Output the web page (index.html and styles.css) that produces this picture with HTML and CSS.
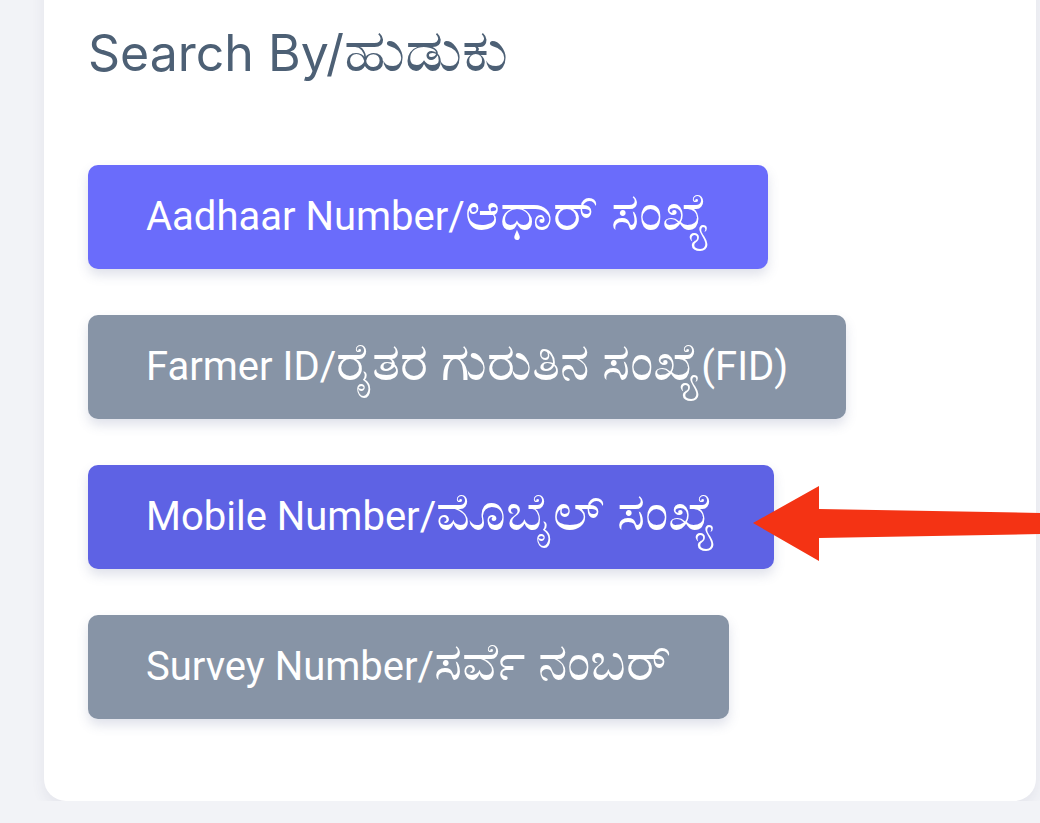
FILE: index.html
```html
<!DOCTYPE html>
<html lang="en">
<head>
    <meta charset="UTF-8">
    <meta name="viewport" content="width=device-width, initial-scale=1.0">
    <title>Search By</title>
    <link rel="stylesheet" href="styles.css">
</head>
<body>
    <div id="card">
        <h2 class="title">Search By/<span class="kn">ಹುಡುಕು</span></h2>
        <div class="options">
            <button class="option primary">Aadhaar Number/<span class="kn">ಆಧಾರ್ ಸಂಖ್ಯೆ</span></button>
            <button class="option muted">Farmer ID/<span class="kn">ರೈತರ ಗುರುತಿನ ಸಂಖ್ಯೆ</span>(FID)</button>
            <div class="pointed">
                <button class="option active">Mobile Number/<span class="kn">ಮೊಬೈಲ್ ಸಂಖ್ಯೆ</span></button>
                <svg class="arrow" width="290" height="76" viewBox="0 0 290 76">
                    <polygon points="0,37 66,0 66,23 290,27 290,48 66,52 66,75" fill="#f43314"/>
                </svg>
            </div>
            <button class="option muted">Survey Number/<span class="kn">ಸರ್ವೆ ನಂಬರ್</span></button>
        </div>
    </div>
</body>
</html>
```

FILE: styles.css
```css
body {
    margin: 0;
    background-color: #f2f3f7;
    font-family: Roboto, "Noto Sans", sans-serif;
    overflow: hidden;
}
#card {
    margin: -33px 4px 0 44px;
    padding: 54px 44px 82px 44px;
    background-color: #fff;
    border-radius: 22px;
    box-shadow: 0 6px 14px rgba(60, 70, 100, 0.08);
}
.title {
    margin: 0;
    font-family: Inter, "Noto Sans", sans-serif;
    font-size: 50px;
    line-height: 64px;
    font-weight: 400;
    color: #4d6075;
}
.title .kn {
    font-size: 1.2em;
    line-height: 0;
}
.options {
    display: flex;
    flex-direction: column;
    align-items: flex-start;
    gap: 46px;
    margin-top: 80px;
}
.option {
    height: 104px;
    padding: 0 58px;
    border: none;
    border-radius: 10px;
    font-family: Roboto, "Noto Sans", sans-serif;
    font-size: 40px;
    line-height: 1;
    color: #fff;
    text-align: left;
    box-shadow: 0 6px 12px rgba(80, 90, 140, 0.18);
}
.option .kn {
    font-size: 1.32em;
    line-height: 0;
}
.primary {
    background-color: #6a6cfb;
}
.active {
    background-color: #5e62e4;
}
.muted {
    background-color: #8794a6;
}
.pointed {
    position: relative;
}
.arrow {
    position: absolute;
    left: 665px;
    top: 21px;
}
```
